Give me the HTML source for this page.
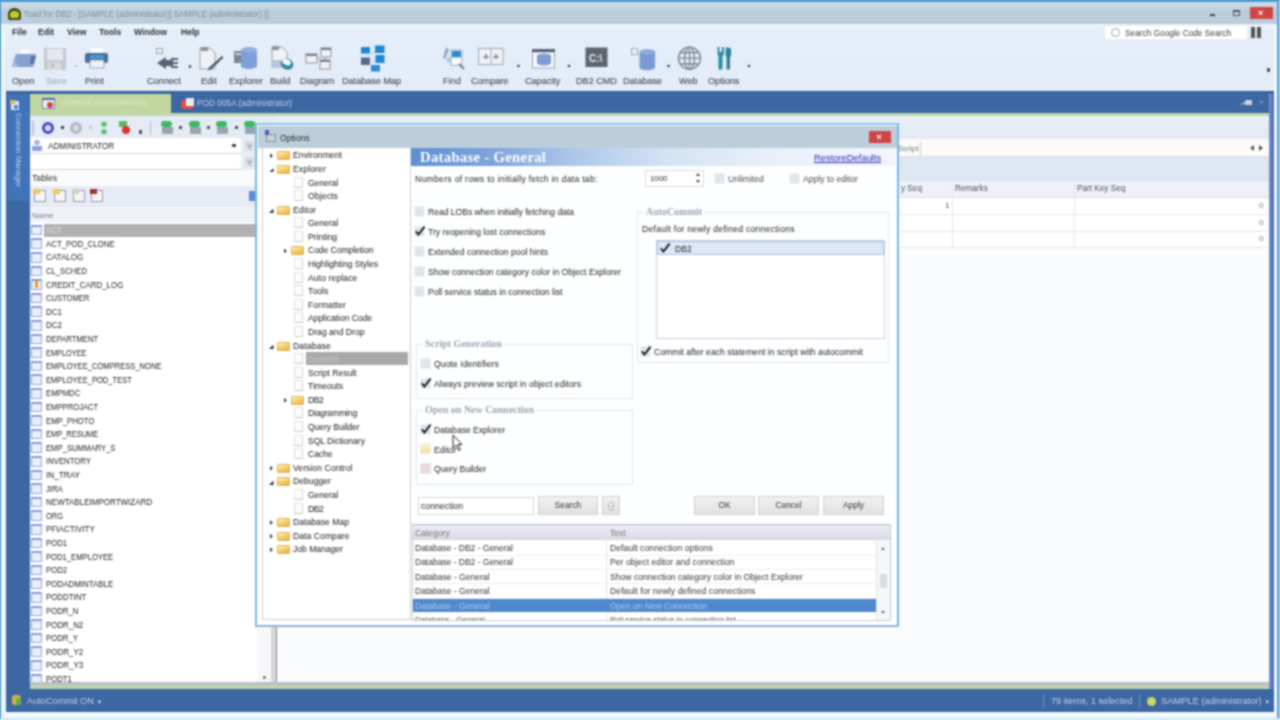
<!DOCTYPE html>
<html lang="en"><head><meta charset="utf-8"><title>Toad for DB2 - Options</title>
<style>
*{box-sizing:border-box;margin:0;padding:0}
html,body{width:1280px;height:720px;overflow:hidden;background:#f4f9fc}
body{font-family:"Liberation Sans","DejaVu Sans",sans-serif;font-size:8.4px;color:#2a2a2a;position:relative;line-height:1}
.a{position:absolute}
.t{position:absolute;white-space:nowrap;line-height:10px;height:10px}
.b{font-weight:bold}
.w{color:#fff}
.cb{position:absolute;width:11px;height:11px;background:#e1e4e9;border:1px solid #f0f2f5}
.ck{position:absolute;font-size:14px;line-height:14px;font-weight:bold;color:#0a0a0a;margin:0 0 0 -1px}
.btn{position:absolute;height:18.600px;background:linear-gradient(#f1f1f1,#e1e1e1);border:1px solid #d2d2d2;text-align:center;line-height:17px;font-size:8.4px;color:#333}
.gb{position:absolute;border:1px solid #e3e6ea}
.lg{position:absolute;font-family:"Liberation Serif","DejaVu Serif",serif;font-weight:bold;font-size:10px;color:#a0a3b4;background:#fdfeff;padding:0 2px;line-height:10px;white-space:nowrap}
.ic{position:absolute}
.fold{position:absolute;width:12.5px;height:9px;margin-top:.5px;background:linear-gradient(160deg,#fbeeb4 10%,#f3cc60 55%,#e9a94a 100%);border:1px solid #dfb45e;border-radius:1px}
.pg{position:absolute;width:8.5px;height:11px;background:#fcfcfc;border:1px solid #e2e2e2;border-bottom-color:#cfcac6;border-right-color:#d8d6d4}
.tbl{position:absolute;width:10.5px;height:10.5px;background:#eceef9;border:1px solid #9aa6de;border-left:1.5px solid #8494d8;border-top:2.5px solid #8795de}
#W{position:absolute;left:-20px;top:-20px;width:1320px;height:760px;filter:url(#bl);background:#f2f8fc}
#P{position:absolute;left:20px;top:20px;width:1280px;height:720px}
</style></head><body><svg width="0" height="0" style="position:absolute"><defs><filter id="bl" x="0" y="0" width="100%" height="100%" color-interpolation-filters="sRGB"><feConvolveMatrix order="5" kernelMatrix="0.0014 0.0090 0.0168 0.0090 0.0014 0.0090 0.0576 0.1067 0.0576 0.0090 0.0168 0.1067 0.1979 0.1067 0.0168 0.0090 0.0576 0.1067 0.0576 0.0090 0.0014 0.0090 0.0168 0.0090 0.0014" divisor="1" edgeMode="duplicate" preserveAlpha="true"/></filter></defs></svg><div id="W"><div id="P">

<div class="a" style="left:0;top:0;width:1280px;height:720px;background:#f2f8fc"></div>
<div class="a" style="left:-5px;top:-5px;width:1290px;height:6.5px;background:#4a9ad0"></div>
<div class="a" style="left:-5px;top:0;width:6.3px;height:720px;background:#4a9ad0"></div>
<div class="a" style="left:1276.8px;top:0;width:1.8px;height:720px;background:#5aa0d6"></div><div class="a" style="left:1278.6px;top:0;width:8px;height:720px;background:#b9d3e6"></div>
<div class="a" style="left:0;top:718px;width:1280px;height:2px;background:#c8ebf5"></div>
<div class="a" style="left:1.3px;top:1.5px;width:1276px;height:22.5px;background:linear-gradient(#cddde7 0,#c6d6e1 6px,#bccddb 9px,#bccddb 100%)"></div>
<div class="ic" style="left:7.500px;top:8px;width:13.500px;height:12px;background:#3e4a12;border-radius:6px 6px 2px 2px"></div>
<div class="ic" style="left:10px;top:11px;width:8.500px;height:6.500px;background:#c6cc2c;border-radius:4px 4px 2px 2px"></div>
<div class="t" style="left:23.500px;top:10px;color:#82929e;font-size:8.2px">Toad for DB2 - [SAMPLE (administrator)] SAMPLE (administrator) []</div>
<div class="a" style="left:1250px;top:7px;width:23px;height:12px;background:#cf4545"></div>
<div class="t w b" style="left:1258px;top:8px;font-size:9px">×</div>
<div class="a" style="left:1210px;top:14px;width:5px;height:2px;background:#444"></div>
<div class="a" style="left:1233px;top:10px;width:7px;height:6px;border:1px solid #555;border-top:2px solid #555"></div>
<div class="a" style="left:5px;top:24px;width:1269px;height:68px;background:linear-gradient(#eef4fb 0,#e4edf8 8px,#e3ecf7 100%)"></div>
<div class="a" style="left:1.3px;top:24px;width:4px;height:694px;background:#eef5fb"></div>
<div class="t b" style="left:12px;top:27px;font-size:8.6px;color:#333">File</div>
<div class="t b" style="left:38px;top:27px;font-size:8.6px;color:#333">Edit</div>
<div class="t b" style="left:67px;top:27px;font-size:8.6px;color:#333">View</div>
<div class="t b" style="left:99px;top:27px;font-size:8.6px;color:#333">Tools</div>
<div class="t b" style="left:134px;top:27px;font-size:8.6px;color:#333">Window</div>
<div class="t b" style="left:181px;top:27px;font-size:8.6px;color:#333">Help</div>
<div class="a" style="left:1104px;top:25px;width:144px;height:15px;background:#fff;border:1px solid #e8eef5"></div>
<div class="a" style="left:1111px;top:28px;width:9px;height:9px;border:1px solid #999;border-radius:5px"></div>
<div class="t" style="left:1125px;top:28px;font-size:8.3px;color:#3a3a3a">Search Google Code Search</div>
<div class="ic" style="left:1251px;top:27px;width:4px;height:11px;background:#555"></div><div class="ic" style="left:1257px;top:27px;width:4px;height:11px;background:#555"></div>
<div class="a" style="left:1267px;top:68px;width:3px;height:4px;background:#555"></div>
<div class="t" style="left:12px;top:76px;color:#434852;font-size:9.1px;-webkit-text-stroke:.1px #434852">Open</div>
<div class="t" style="left:46px;top:76px;color:#aab2bb;font-size:9.1px;-webkit-text-stroke:.1px #aab2bb">Save</div>
<div class="t" style="left:85px;top:76px;color:#434852;font-size:9.1px;-webkit-text-stroke:.1px #434852">Print</div>
<div class="t" style="left:147px;top:76px;color:#434852;font-size:9.1px;-webkit-text-stroke:.1px #434852">Connect</div>
<div class="t" style="left:201px;top:76px;color:#434852;font-size:9.1px;-webkit-text-stroke:.1px #434852">Edit</div>
<div class="t" style="left:229px;top:76px;color:#434852;font-size:9.1px;-webkit-text-stroke:.1px #434852">Explorer</div>
<div class="t" style="left:270px;top:76px;color:#434852;font-size:9.1px;-webkit-text-stroke:.1px #434852">Build</div>
<div class="t" style="left:300px;top:76px;color:#434852;font-size:9.1px;-webkit-text-stroke:.1px #434852">Diagram</div>
<div class="t" style="left:342px;top:76px;color:#434852;font-size:9.1px;-webkit-text-stroke:.1px #434852">Database Map</div>
<div class="t" style="left:443px;top:76px;color:#434852;font-size:9.1px;-webkit-text-stroke:.1px #434852">Find</div>
<div class="t" style="left:471px;top:76px;color:#434852;font-size:9.1px;-webkit-text-stroke:.1px #434852">Compare</div>
<div class="t" style="left:525px;top:76px;color:#434852;font-size:9.1px;-webkit-text-stroke:.1px #434852">Capacity</div>
<div class="t" style="left:576px;top:76px;color:#434852;font-size:9.1px;-webkit-text-stroke:.1px #434852">DB2 CMD</div>
<div class="t" style="left:623px;top:76px;color:#434852;font-size:9.1px;-webkit-text-stroke:.1px #434852">Database</div>
<div class="t" style="left:679px;top:76px;color:#434852;font-size:9.1px;-webkit-text-stroke:.1px #434852">Web</div>
<div class="t" style="left:708px;top:76px;color:#434852;font-size:9.1px;-webkit-text-stroke:.1px #434852">Options</div><svg class="a" style="left:0;top:40px" width="780" height="36" viewBox="0 40 780 36">
<path d="M20 49h10v6h-10z" fill="#f6f8fc"/><path d="M16 54h20l-3 13h-21z" fill="#879fd2"/><path d="M31 56h5l-2 8h-4z" fill="#5a74aa"/><path d="M14 57l-2 10h6z" fill="#a8b8de"/>
<rect x="44" y="48" width="22" height="22" fill="#c6c8d0"/><rect x="47" y="49" width="16" height="11" fill="#e6e7ec"/><rect x="48" y="62" width="13" height="8" fill="#d9dae0"/><rect x="51" y="63" width="3" height="5" fill="#bdbfc8"/>
<circle cx="76" cy="66" r="1.1" fill="#b0b6c0"/>
<rect x="91" y="48" width="12" height="6" fill="#fbfcfe"/><rect x="85" y="53" width="23" height="10" rx="2" fill="#4a6c98"/><rect x="90" y="55" width="14" height="3.5" fill="#3b9ade"/><rect x="90" y="60" width="14" height="8" fill="#eef0f5" stroke="#8d96a6" stroke-width=".8"/>
<rect x="156.5" y="48.5" width="6" height="5" fill="#e8edf4" stroke="#a5acb8"/><path d="M157 63l9-6v3h5v-2h7v2h-5v2h5v2h-5v2h5v2h-7v-2h-5v3z" fill="#566274"/>
<circle cx="190" cy="66.5" r="1.3" fill="#3c3c44"/>
<path d="M200 48h10l5 5v16h-15z" fill="#f0f2f7" stroke="#9aa0ac" stroke-width="1"/><path d="M201 47h7v4h-7z" fill="#8c94a2"/><path d="M222 56l1.5 1.5-12.5 12-3 1 1-3z" fill="#4c5666"/>
<rect x="234" y="51" width="8" height="12" fill="#7c8494"/><rect x="235" y="53" width="6" height="2" fill="#c8ccd6"/><path d="M241 50a8 3 0 0 1 16 0v16a8 3 0 0 1-16 0z" fill="#7e9fd8"/><ellipse cx="249" cy="50" rx="8" ry="2.6" fill="#93b0e2"/>
<path d="M272 47h10l5 5v15h-15z" fill="#f0f2f7" stroke="#9aa0ac"/><path d="M272 46h7v4h-7z" fill="#8c94a2"/><path d="M272 60h9v7h-9z" fill="#b9c1e0"/><ellipse cx="287" cy="64" rx="6.5" ry="5.5" fill="#2c8c9e" transform="rotate(25 287 64)"/><ellipse cx="286.5" cy="62" rx="4.5" ry="3" fill="#f4f8fa" transform="rotate(25 286.5 62)"/>
<rect x="306" y="54" width="11" height="9" fill="#f1f2f6" stroke="#8f929c"/><rect x="306" y="54" width="11" height="2" fill="#7a7e8a"/>
<rect x="321" y="48" width="10" height="9" fill="#f1f2f6" stroke="#8f929c"/><rect x="321" y="48" width="10" height="2" fill="#7a7e8a"/>
<rect x="320" y="60" width="10" height="9" fill="#f1f2f6" stroke="#8f929c"/><rect x="320" y="60" width="10" height="2" fill="#7a7e8a"/>
<path d="M317 58h3M325 57v3" stroke="#8f929c" fill="none"/>
<rect x="361" y="47" width="9" height="6.5" fill="#1f86d2"/>
<rect x="375" y="45.5" width="9.5" height="7.5" fill="#1f86d2"/>
<rect x="361" y="57.5" width="9" height="7.5" fill="#56688c"/>
<rect x="375.5" y="55" width="9" height="8" fill="#1f86d2"/>
<rect x="371" y="65" width="9" height="6.5" fill="#2a8ad6"/>
<path d="M370 55l5-3M372 60l4 3" stroke="#9cc4e8" fill="none"/>
<path d="M446 48l3 1-4 10-2-1z" fill="#8ea2c6"/><rect x="452" y="51" width="9" height="6.5" fill="#2a8ad2"/><rect x="452" y="57.5" width="9" height="7" fill="#f8fafc"/><rect x="451" y="50" width="11" height="15.5" fill="none" stroke="#a6b4cc" stroke-width="1"/><path d="M459 64l5 5" stroke="#6a7486" stroke-width="1.8"/><circle cx="449" cy="60" r="3" fill="#9cc8d8" opacity=".7"/>
<rect x="478.5" y="48.500" width="24.500" height="16" fill="#f1f2f6" stroke="#a2a5ae"/><path d="M491 49v15" stroke="#a2a5ae"/><path d="M483 57h6M493 57h6M486 54v5M496 54v5" stroke="#666a74" stroke-width="1.2"/>
<circle cx="518.500" cy="66" r="1.3" fill="#3c3c44"/>
<rect x="532.5" y="49.500" width="22" height="18.500" fill="#f4f6fa" stroke="#a2a8b4"/><rect x="532" y="49" width="23" height="3.200" fill="#586270"/><path d="M537 56a7 2.5 0 0 1 14 0v7a7 2.500 0 0 1-14 0z" fill="#7c9cd4"/>
<circle cx="569" cy="66" r="1.3" fill="#3c3c44"/>
<rect x="585.5" y="47.500" width="22" height="19.500" fill="#5c646f"/>
<text x="589" y="62" font-family="Liberation Sans,sans-serif" font-weight="bold" font-size="10" fill="#eef0f4">C:\</text>
<rect x="631.5" y="48.500" width="6" height="6" fill="#e9edf4" stroke="#a5acb8"/><path d="M639.5 52a7.800 2.800 0 0 1 15.600 0v15.500a7.800 2.800 0 0 1-15.600 0z" fill="#7b9ad2"/><ellipse cx="647.3" cy="52" rx="7.800" ry="2.500" fill="#8eabde"/>
<circle cx="668.500" cy="66" r="1.3" fill="#3c3c44"/>
<g fill="none" stroke="#7d848e" stroke-width="1.300"><circle cx="689.500" cy="58.200" r="11"/><ellipse cx="689.500" cy="58.200" rx="5" ry="11"/><path d="M678.500 58.200h22M689.500 47.200v22M680.500 52.500h18M680.500 64h18"/></g>
<path d="M717.500 47h2v5h2.500v-5h2v7l-1.500 2v13.500h-4v-13.500l-1-2z" fill="#2b8aa8"/><path d="M726 47l5 1.500v7l-1 1.500v12.500h-3.500v-12.500l-1-1.500z" fill="#2f7f9c"/>
<circle cx="749" cy="66" r="1.3" fill="#3c3c44"/>
</svg><div class="a" style="left:6px;top:91px;width:1268px;height:22px;background:#3c67a3;border-top:1px solid #2f5890"></div>
<div class="a" style="left:6px;top:94px;width:24px;height:618px;background:#3c67a3;"></div>
<div class="a" style="left:8px;top:94px;width:21px;height:107px;background:#4173b8;"></div>
<div class="ic" style="left:11px;top:101px;width:8px;height:9px;background:#dfe8f4"></div><div class="ic" style="left:10px;top:100px;width:5px;height:4px;background:#d4b860"></div><div class="ic" style="left:14px;top:105px;width:4px;height:4px;background:#5a8ad8"></div>
<div class="t" style="left:13px;top:113px;color:#c5d5ea;font-size:8px;transform-origin:0 0;transform:rotate(90deg) translate(0,-10px);">Connection Manager</div>
<div class="a" style="left:1269px;top:94px;width:5px;height:618px;background:linear-gradient(90deg,#8496c8,#5274ba 60%,#4a6fb4);"></div>
<div class="a" style="left:30px;top:94px;width:141px;height:22.3px;background:#c4d6a0;"></div>
<div class="ic" style="left:42px;top:98px;width:13px;height:11px;background:#f0f0e0;border:1px solid #5f8fd0;border-top:2px solid #3f6fc0"></div><div class="ic" style="left:47px;top:102px;width:6px;height:6px;background:#d84040;border-radius:3px"></div>
<div class="t" style="left:60px;top:98px;color:#d9e6c2;font-size:8px">SAMPLE (administrator)</div>
<div class="ic" style="left:181px;top:100px;width:13px;height:9px;background:#e05040;border-radius:3px"></div><div class="ic" style="left:186px;top:98px;width:8px;height:8px;background:#e8eef8"></div>
<div class="t" style="left:197px;top:98px;color:#c0cee6;font-size:8.3px">POD 005A (administrator)</div>
<div class="ic" style="left:1240px;top:100px;width:12px;height:5px;background:#c8d4e8;clip-path:polygon(0 100%,45% 30%,45% 0,100% 0,100% 100%,45% 100%,45% 70%)"></div><div class="ic" style="left:1260px;top:101px;width:3px;height:2px;background:#7f9cc8"></div>
<div class="a" style="left:30px;top:113px;width:1239px;height:3.3px;background:#c0d8ac;"></div>
<div class="a" style="left:30px;top:116px;width:1239px;height:570px;background:#fbfcfe;"></div>
<div class="a" style="left:30px;top:116.3px;width:248px;height:21.7px;background:#e4ebf6;"></div>
<div class="ic" style="left:42px;top:121.5px;width:12px;height:12px;background:#dfe2f8;border:3px solid #4749c4;border-radius:6px"></div>
<div class="ic" style="left:70px;top:121.5px;width:12px;height:12px;background:#d9dce4;border:3px solid #b4b8c4;border-radius:6px"></div>
<div class="ic" style="left:32px;top:121px;width:1.5px;height:14px;background:repeating-linear-gradient(#aab4c4 0,#aab4c4 1.5px,transparent 1.5px,transparent 3px)"></div>
<div class="ic" style="left:89px;top:126px;width:3px;height:3px;background:#c4c8d0"></div>
<div class="ic" style="left:61px;top:126px;width:3px;height:3px;background:#444"></div>
<svg class="a" style="left:98px;top:120px" width="12" height="16" viewBox="0 0 12 16"><path d="M6 1l4 4h-2.500v2h-3v-2h-2.500z" fill="#4fbe5a"/><path d="M6 15l-4-4h2.500v-2h3v2h2.500z" fill="#4fbe5a"/></svg>
<div class="ic" style="left:119px;top:121px;width:8px;height:6px;background:#5cb85c"></div><div class="ic" style="left:122px;top:126px;width:8px;height:8px;background:#e03030;border-radius:4px"></div>
<div class="ic" style="left:139px;top:130px;width:3px;height:4px;background:#555"></div>
<div class="a" style="left:150px;top:121px;width:1px;height:14px;background:#b8c0cc;"></div>
<div class="ic" style="left:161px;top:121px;width:11px;height:6px;background:#3cb860;border-radius:3px"></div><div class="ic" style="left:162px;top:127px;width:11px;height:7px;background:#9aa4ae"></div>
<div class="ic" style="left:189px;top:121px;width:11px;height:6px;background:#3cb860;border-radius:3px"></div><div class="ic" style="left:190px;top:127px;width:11px;height:7px;background:#9aa4ae"></div>
<div class="ic" style="left:216px;top:121px;width:11px;height:6px;background:#3cb860;border-radius:3px"></div><div class="ic" style="left:217px;top:127px;width:11px;height:7px;background:#9aa4ae"></div>
<div class="ic" style="left:244px;top:121px;width:11px;height:6px;background:#3cb860;border-radius:3px"></div><div class="ic" style="left:245px;top:127px;width:11px;height:7px;background:#9aa4ae"></div>
<div class="ic" style="left:179px;top:126px;width:3px;height:3px;background:#555"></div>
<div class="ic" style="left:207px;top:126px;width:3px;height:3px;background:#555"></div>
<div class="ic" style="left:235px;top:126px;width:3px;height:3px;background:#555"></div>
<div class="a" style="left:30px;top:138px;width:211px;height:16px;background:#fff;border-bottom:1px solid #d0d4da"></div>
<div class="a" style="left:30px;top:154px;width:211px;height:16px;background:#fff;border-bottom:1px solid #d0d4da"></div>
<div class="a" style="left:241px;top:138px;width:29px;height:32px;background:#e9edf3;"></div>
<div class="ic" style="left:34px;top:140px;width:6px;height:5px;background:#a8b4d8;border-radius:3px"></div><div class="ic" style="left:32px;top:146px;width:10px;height:5px;background:#8f9ed8"></div>
<div class="t" style="left:47.5px;top:141px;color:#1a1a1a;font-size:8.7px;transform-origin:0 50%;transform:scaleX(.93)">ADMINISTRATOR</div>
<div class="ic" style="left:232px;top:144px;width:4px;height:3px;background:#444"></div>
<div class="ic" style="left:245px;top:141px;width:9px;height:10px;background:#d9dde4"></div><div class="ic" style="left:245px;top:157px;width:9px;height:10px;background:#d9dde4"></div>
<div class="t" style="left:247px;top:142px;color:#777;font-size:8px">Y</div><div class="t" style="left:247px;top:158px;color:#777;font-size:8px">Y</div>
<div class="a" style="left:30px;top:170px;width:240px;height:16px;background:#fafbfd;"></div>
<div class="t" style="left:32px;top:173px;color:#2a2a2a;font-size:8.7px">Tables</div>
<div class="a" style="left:30px;top:186px;width:240px;height:21px;background:#e6ebf5;border-bottom:1px solid #dfe3ea"></div>
<div class="ic" style="left:34px;top:190px;width:12px;height:12px;background:#f4f5f8;border:1px solid #99a"></div><div class="ic" style="left:33px;top:189px;width:7px;height:5px;background:#f0c860"></div>
<div class="ic" style="left:54px;top:190px;width:12px;height:12px;background:#f4f5f8;border:1px solid #99a"></div><div class="ic" style="left:53px;top:189px;width:7px;height:5px;background:#f0c860"></div>
<div class="ic" style="left:73px;top:190px;width:12px;height:12px;background:#f4f5f8;border:1px solid #99a"></div><div class="ic" style="left:72px;top:189px;width:7px;height:5px;background:#d8d0c0"></div>
<div class="ic" style="left:91px;top:190px;width:12px;height:12px;background:#f4f5f8;border:1px solid #99a"></div><div class="ic" style="left:90px;top:189px;width:7px;height:5px;background:#a03030"></div>
<div class="ic" style="left:249px;top:191px;width:8px;height:10px;background:#5a8ad8"></div>
<div class="a" style="left:30px;top:208px;width:240px;height:14px;background:#eef1f6;"></div>
<div class="t" style="left:32px;top:211px;color:#7a8088;font-size:8px">Name</div>
<div class="a" style="left:30px;top:222px;width:228px;height:464px;background:#fff;"></div>
<div class="a" style="left:43.5px;top:223.5px;width:214.5px;height:13.5px;background:#b2b0b3;"></div>
<div class="tbl" style="left:31px;top:224.8px"></div><div class="t" style="left:46px;top:225.1px;color:#dadada;font-size:8.7px;transform-origin:0 50%;transform:scaleX(0.892)">ACT</div>
<div class="tbl" style="left:31px;top:238.4px"></div><div class="t" style="left:46px;top:238.7px;color:#1a1a1a;font-size:8.7px;transform-origin:0 50%;transform:scaleX(0.906)">ACT_POD_CLONE</div>
<div class="tbl" style="left:31px;top:252.0px"></div><div class="t" style="left:46px;top:252.3px;color:#1a1a1a;font-size:8.7px;transform-origin:0 50%;transform:scaleX(0.926)">CATALOG</div>
<div class="tbl" style="left:31px;top:265.6px"></div><div class="t" style="left:46px;top:265.9px;color:#1a1a1a;font-size:8.7px;transform-origin:0 50%;transform:scaleX(0.883)">CL_SCHED</div>
<div class="tbl" style="left:31px;top:279.2px"></div><div class="t" style="left:46px;top:279.5px;color:#1a1a1a;font-size:8.7px;transform-origin:0 50%;transform:scaleX(0.910)">CREDIT_CARD_LOG</div>
<div class="tbl" style="left:31px;top:292.8px"></div><div class="t" style="left:46px;top:293.1px;color:#1a1a1a;font-size:8.7px;transform-origin:0 50%;transform:scaleX(0.873)">CUSTOMER</div>
<div class="tbl" style="left:31px;top:306.4px"></div><div class="t" style="left:46px;top:306.7px;color:#1a1a1a;font-size:8.7px;transform-origin:0 50%;transform:scaleX(0.919)">DC1</div>
<div class="tbl" style="left:31px;top:320.0px"></div><div class="t" style="left:46px;top:320.3px;color:#1a1a1a;font-size:8.7px;transform-origin:0 50%;transform:scaleX(0.919)">DC2</div>
<div class="tbl" style="left:31px;top:333.6px"></div><div class="t" style="left:46px;top:333.9px;color:#1a1a1a;font-size:8.7px;transform-origin:0 50%;transform:scaleX(0.884)">DEPARTMENT</div>
<div class="tbl" style="left:31px;top:347.2px"></div><div class="t" style="left:46px;top:347.5px;color:#1a1a1a;font-size:8.7px;transform-origin:0 50%;transform:scaleX(0.848)">EMPLOYEE</div>
<div class="tbl" style="left:31px;top:360.8px"></div><div class="t" style="left:46px;top:361.1px;color:#1a1a1a;font-size:8.7px;transform-origin:0 50%;transform:scaleX(0.873)">EMPLOYEE_COMPRESS_NONE</div>
<div class="tbl" style="left:31px;top:374.4px"></div><div class="t" style="left:46px;top:374.7px;color:#1a1a1a;font-size:8.7px;transform-origin:0 50%;transform:scaleX(0.872)">EMPLOYEE_POD_TEST</div>
<div class="tbl" style="left:31px;top:388.0px"></div><div class="t" style="left:46px;top:388.3px;color:#1a1a1a;font-size:8.7px;transform-origin:0 50%;transform:scaleX(0.887)">EMPMDC</div>
<div class="tbl" style="left:31px;top:401.6px"></div><div class="t" style="left:46px;top:401.9px;color:#1a1a1a;font-size:8.7px;transform-origin:0 50%;transform:scaleX(0.880)">EMPPROJACT</div>
<div class="tbl" style="left:31px;top:415.2px"></div><div class="t" style="left:46px;top:415.5px;color:#1a1a1a;font-size:8.7px;transform-origin:0 50%;transform:scaleX(0.890)">EMP_PHOTO</div>
<div class="tbl" style="left:31px;top:428.8px"></div><div class="t" style="left:46px;top:429.1px;color:#1a1a1a;font-size:8.7px;transform-origin:0 50%;transform:scaleX(0.859)">EMP_RESUME</div>
<div class="tbl" style="left:31px;top:442.4px"></div><div class="t" style="left:46px;top:442.7px;color:#1a1a1a;font-size:8.7px;transform-origin:0 50%;transform:scaleX(0.884)">EMP_SUMMARY_S</div>
<div class="tbl" style="left:31px;top:456.0px"></div><div class="t" style="left:46px;top:456.3px;color:#1a1a1a;font-size:8.7px;transform-origin:0 50%;transform:scaleX(0.892)">INVENTORY</div>
<div class="tbl" style="left:31px;top:469.6px"></div><div class="t" style="left:46px;top:469.9px;color:#1a1a1a;font-size:8.7px;transform-origin:0 50%;transform:scaleX(0.942)">IN_TRAY</div>
<div class="tbl" style="left:31px;top:483.2px"></div><div class="t" style="left:46px;top:483.5px;color:#1a1a1a;font-size:8.7px;transform-origin:0 50%;transform:scaleX(0.892)">JIRA</div>
<div class="tbl" style="left:31px;top:496.8px"></div><div class="t" style="left:46px;top:497.1px;color:#1a1a1a;font-size:8.7px;transform-origin:0 50%;transform:scaleX(0.923)">NEWTABLEIMPORTWIZARD</div>
<div class="tbl" style="left:31px;top:510.4px"></div><div class="t" style="left:46px;top:510.7px;color:#1a1a1a;font-size:8.7px;transform-origin:0 50%;transform:scaleX(0.858)">ORG</div>
<div class="tbl" style="left:31px;top:524.0px"></div><div class="t" style="left:46px;top:524.3px;color:#1a1a1a;font-size:8.7px;transform-origin:0 50%;transform:scaleX(0.930)">PFIACTIVITY</div>
<div class="tbl" style="left:31px;top:537.6px"></div><div class="t" style="left:46px;top:537.9px;color:#1a1a1a;font-size:8.7px;transform-origin:0 50%;transform:scaleX(0.892)">POD1</div>
<div class="tbl" style="left:31px;top:551.2px"></div><div class="t" style="left:46px;top:551.5px;color:#1a1a1a;font-size:8.7px;transform-origin:0 50%;transform:scaleX(0.881)">POD1_EMPLOYEE</div>
<div class="tbl" style="left:31px;top:564.8px"></div><div class="t" style="left:46px;top:565.1px;color:#1a1a1a;font-size:8.7px;transform-origin:0 50%;transform:scaleX(0.892)">POD2</div>
<div class="tbl" style="left:31px;top:578.4px"></div><div class="t" style="left:46px;top:578.7px;color:#1a1a1a;font-size:8.7px;transform-origin:0 50%;transform:scaleX(0.912)">PODADMINTABLE</div>
<div class="tbl" style="left:31px;top:592.0px"></div><div class="t" style="left:46px;top:592.3px;color:#1a1a1a;font-size:8.7px;transform-origin:0 50%;transform:scaleX(0.906)">PODDTINT</div>
<div class="tbl" style="left:31px;top:605.6px"></div><div class="t" style="left:46px;top:605.9px;color:#1a1a1a;font-size:8.7px;transform-origin:0 50%;transform:scaleX(0.892)">PODR_N</div>
<div class="tbl" style="left:31px;top:619.2px"></div><div class="t" style="left:46px;top:619.5px;color:#1a1a1a;font-size:8.7px;transform-origin:0 50%;transform:scaleX(0.908)">PODR_N2</div>
<div class="tbl" style="left:31px;top:632.8px"></div><div class="t" style="left:46px;top:633.1px;color:#1a1a1a;font-size:8.7px;transform-origin:0 50%;transform:scaleX(0.892)">PODR_Y</div>
<div class="tbl" style="left:31px;top:646.4px"></div><div class="t" style="left:46px;top:646.7px;color:#1a1a1a;font-size:8.7px;transform-origin:0 50%;transform:scaleX(0.918)">PODR_Y2</div>
<div class="tbl" style="left:31px;top:660.0px"></div><div class="t" style="left:46px;top:660.3px;color:#1a1a1a;font-size:8.7px;transform-origin:0 50%;transform:scaleX(0.918)">PODR_Y3</div>
<div class="tbl" style="left:31px;top:673.6px"></div><div class="t" style="left:46px;top:673.9px;color:#1a1a1a;font-size:8.7px;transform-origin:0 50%;transform:scaleX(0.896)">PODT1</div>
<div class="ic" style="left:35px;top:281px;width:3px;height:7px;background:#e8a020"></div>
<div class="a" style="left:257px;top:222px;width:14px;height:461px;background:#f7f8fa;"></div>
<div class="ic" style="left:263px;top:676px;width:3px;height:3px;background:#888"></div>
<div class="a" style="left:271px;top:130px;width:5px;height:553px;background:#d6d7dc;"></div>
<div class="a" style="left:276px;top:130px;width:1.2px;height:553px;background:#8b8b93;"></div>
<div class="a" style="left:277px;top:116.3px;width:992px;height:23px;background:linear-gradient(#e9eff8,#e2e9f4);"></div>
<div class="a" style="left:276px;top:139px;width:993px;height:17.5px;background:#fdfaf9;border-bottom:1px solid #dcdde2"></div>
<div class="t" style="left:898px;top:144px;color:#777;font-size:8px">Script</div>
<div class="a" style="left:920px;top:142px;width:1px;height:14px;background:#ccc;"></div>
<div class="ic" style="left:1250px;top:145px;width:4px;height:6px;background:#555;clip-path:polygon(100% 0,0 50%,100% 100%)"></div><div class="ic" style="left:1259px;top:145px;width:4px;height:6px;background:#555;clip-path:polygon(0 0,100% 50%,0 100%)"></div>
<div class="a" style="left:276px;top:156.5px;width:993px;height:24.5px;background:#dee6f1;"></div>
<div class="a" style="left:276px;top:181px;width:993px;height:17px;background:#eef1f7;border-bottom:1px solid #dde0e6"></div>
<div class="t" style="left:901px;top:184px;color:#4a4f58;font-size:8.2px">y Seq</div>
<div class="t" style="left:955px;top:184px;color:#4a4f58;font-size:8.2px">Remarks</div>
<div class="t" style="left:1077px;top:184px;color:#4a4f58;font-size:8.2px">Part Key Seq</div>
<div class="a" style="left:276px;top:198px;width:993px;height:50px;background:#fff;"></div>
<div class="a" style="left:276px;top:214px;width:993px;height:1px;background:#e6e8ec;"></div>
<div class="a" style="left:276px;top:231px;width:993px;height:1px;background:#e6e8ec;"></div>
<div class="a" style="left:276px;top:247px;width:993px;height:1px;background:#e6e8ec;"></div>
<div class="a" style="left:952px;top:181px;width:1px;height:67px;background:#e2e5ea;"></div>
<div class="a" style="left:1074px;top:181px;width:1px;height:67px;background:#e2e5ea;"></div>
<div class="t" style="left:945px;top:201px;color:#555;font-size:8px">1</div>
<div class="t" style="left:1259px;top:201px;color:#777;font-size:8px">0</div>
<div class="t" style="left:1259px;top:218px;color:#777;font-size:8px">0</div>
<div class="t" style="left:1259px;top:234px;color:#777;font-size:8px">0</div>
<div class="a" style="left:30px;top:682.3px;width:1239px;height:3.2px;background:#bebdc7;"></div>
<div class="a" style="left:30px;top:685px;width:1239px;height:4px;background:#bdd4aa;"></div>
<div class="a" style="left:6px;top:689px;width:1268px;height:23px;background:#3c67a3;"></div>
<div class="ic" style="left:12px;top:695px;width:9px;height:10px;background:#d8b040;border-radius:3px"></div><div class="ic" style="left:16px;top:698px;width:5px;height:7px;background:#60b050"></div>
<div class="t" style="left:27px;top:695.5px;color:#c3d1e8;font-size:9.2px">AutoCommit ON <span style="font-size:6px">▼</span></div>
<div class="a" style="left:1043px;top:694px;width:1px;height:14px;background:#6f8fc0;"></div>
<div class="a" style="left:1139px;top:694px;width:1px;height:14px;background:#6f8fc0;"></div>
<div class="t" style="left:1051px;top:695.5px;color:#c3d1e8;font-size:9.2px">79 items, 1 selected</div>
<div class="ic" style="left:1147px;top:697px;width:9px;height:9px;background:#c8d860;border-radius:5px"></div>
<div class="t" style="left:1161px;top:695.5px;color:#c3d1e8;font-size:9.35px">SAMPLE (administrator) <span style="font-size:6px">▼</span></div><div class="a" style="left:255.3px;top:123.3px;width:643.4px;height:504.2px;background:#fdfeff;border:2.4px solid #74b8e4;border-bottom-color:#8fb2d6;border-top-color:#8cc6e2"></div>
<div class="a" style="left:257.5px;top:125.5px;width:639px;height:22.3px;background:#bdcedb;"></div>
<div class="ic" style="left:266px;top:134px;width:10px;height:8px;background:#c9d0d4;border:1px solid #8a9498"></div><div class="ic" style="left:265px;top:130px;width:4px;height:5px;background:#4a5cc0"></div>
<div class="t" style="left:280px;top:133px;color:#2a2a2a;font-size:8.6px;">Options</div>
<div class="a" style="left:869px;top:131px;width:22px;height:12px;background:#cf4545;"></div>
<div class="t w b" style="left:876.5px;top:132px;font-size:9px">×</div>
<div class="a" style="left:262px;top:147.8px;width:148.5px;height:472.2px;background:#fff;border:1px solid #cfcfd4;border-top:none"></div>
<div class="ic" style="left:270px;top:153.3px;width:3px;height:5px;background:#444;clip-path:polygon(0 0,100% 50%,0 100%)"></div>
<div class="fold" style="left:277px;top:150.8px"></div>
<div class="t" style="left:293px;top:150.3px;color:#161616;font-size:8.6px;letter-spacing:0.07px;">Environment</div>
<div class="ic" style="left:269px;top:167.9px;width:4.5px;height:4.5px;background:#333;clip-path:polygon(100% 0,100% 100%,0 100%)"></div>
<div class="fold" style="left:277px;top:164.4px"></div>
<div class="t" style="left:293px;top:163.9px;color:#161616;font-size:8.6px;letter-spacing:0.12px;">Explorer</div>
<div class="pg" style="left:294px;top:176.5px"></div>
<div class="t" style="left:308px;top:177.5px;color:#161616;font-size:8.6px;letter-spacing:-0.08px;">General</div>
<div class="pg" style="left:294px;top:190.1px"></div>
<div class="t" style="left:308px;top:191.1px;color:#161616;font-size:8.6px;letter-spacing:0.12px;">Objects</div>
<div class="ic" style="left:269px;top:208.6px;width:4.5px;height:4.5px;background:#333;clip-path:polygon(100% 0,100% 100%,0 100%)"></div>
<div class="fold" style="left:277px;top:205.1px"></div>
<div class="t" style="left:293px;top:204.6px;color:#161616;font-size:8.6px;letter-spacing:0.09px;">Editor</div>
<div class="pg" style="left:294px;top:217.2px"></div>
<div class="t" style="left:308px;top:218.2px;color:#161616;font-size:8.6px;letter-spacing:-0.08px;">General</div>
<div class="pg" style="left:294px;top:230.8px"></div>
<div class="t" style="left:308px;top:231.8px;color:#161616;font-size:8.6px;letter-spacing:-0.02px;">Printing</div>
<div class="ic" style="left:284px;top:248.4px;width:3px;height:5px;background:#444;clip-path:polygon(0 0,100% 50%,0 100%)"></div>
<div class="fold" style="left:291px;top:245.9px"></div>
<div class="t" style="left:308px;top:245.4px;color:#161616;font-size:8.6px;letter-spacing:-0.07px;">Code Completion</div>
<div class="pg" style="left:294px;top:258.0px"></div>
<div class="t" style="left:308px;top:259.0px;color:#161616;font-size:8.6px;letter-spacing:-0.04px;">Highlighting Styles</div>
<div class="pg" style="left:294px;top:271.6px"></div>
<div class="t" style="left:308px;top:272.6px;color:#161616;font-size:8.6px;letter-spacing:0.10px;">Auto replace</div>
<div class="pg" style="left:294px;top:285.2px"></div>
<div class="t" style="left:308px;top:286.2px;color:#161616;font-size:8.6px;letter-spacing:0.08px;">Tools</div>
<div class="pg" style="left:294px;top:298.7px"></div>
<div class="t" style="left:308px;top:299.7px;color:#161616;font-size:8.6px;letter-spacing:0.08px;">Formatter</div>
<div class="pg" style="left:294px;top:312.3px"></div>
<div class="t" style="left:308px;top:313.3px;color:#161616;font-size:8.6px;letter-spacing:-0.06px;">Application Code</div>
<div class="pg" style="left:294px;top:325.9px"></div>
<div class="t" style="left:308px;top:326.9px;color:#161616;font-size:8.6px;letter-spacing:0.01px;">Drag and Drop</div>
<div class="ic" style="left:269px;top:344.5px;width:4.5px;height:4.5px;background:#333;clip-path:polygon(100% 0,100% 100%,0 100%)"></div>
<div class="fold" style="left:277px;top:341.0px"></div>
<div class="t" style="left:293px;top:340.5px;color:#161616;font-size:8.6px;letter-spacing:0.15px;">Database</div>
<div class="pg" style="left:294px;top:353.1px"></div>
<div class="a" style="left:306px;top:351.8px;width:102px;height:13.6px;background:#a9a9ab;"></div>
<div class="t" style="left:308px;top:354.1px;color:#c4c4c4;font-size:8.6px;letter-spacing:-0.08px;">General</div>
<div class="pg" style="left:294px;top:366.7px"></div>
<div class="t" style="left:308px;top:367.7px;color:#161616;font-size:8.6px;letter-spacing:-0.02px;">Script Result</div>
<div class="pg" style="left:294px;top:380.3px"></div>
<div class="t" style="left:308px;top:381.3px;color:#161616;font-size:8.6px;letter-spacing:-0.01px;">Timeouts</div>
<div class="ic" style="left:284px;top:397.8px;width:3px;height:5px;background:#444;clip-path:polygon(0 0,100% 50%,0 100%)"></div>
<div class="fold" style="left:291px;top:395.3px"></div>
<div class="t" style="left:308px;top:394.8px;color:#161616;font-size:8.6px;letter-spacing:-0.41px;">DB2</div>
<div class="pg" style="left:294px;top:407.4px"></div>
<div class="t" style="left:308px;top:408.4px;color:#161616;font-size:8.6px;letter-spacing:-0.19px;">Diagramming</div>
<div class="pg" style="left:294px;top:421.0px"></div>
<div class="t" style="left:308px;top:422.0px;color:#161616;font-size:8.6px;letter-spacing:-0.08px;">Query Builder</div>
<div class="pg" style="left:294px;top:434.6px"></div>
<div class="t" style="left:308px;top:435.6px;color:#161616;font-size:8.6px;letter-spacing:-0.04px;">SQL Dictionary</div>
<div class="pg" style="left:294px;top:448.2px"></div>
<div class="t" style="left:308px;top:449.2px;color:#161616;font-size:8.6px;letter-spacing:-0.07px;">Cache</div>
<div class="ic" style="left:270px;top:465.8px;width:3px;height:5px;background:#444;clip-path:polygon(0 0,100% 50%,0 100%)"></div>
<div class="fold" style="left:277px;top:463.3px"></div>
<div class="t" style="left:293px;top:462.8px;color:#161616;font-size:8.6px;letter-spacing:0.05px;">Version Control</div>
<div class="ic" style="left:269px;top:480.4px;width:4.5px;height:4.5px;background:#333;clip-path:polygon(100% 0,100% 100%,0 100%)"></div>
<div class="fold" style="left:277px;top:476.9px"></div>
<div class="t" style="left:293px;top:476.4px;color:#161616;font-size:8.6px;letter-spacing:0.03px;">Debugger</div>
<div class="pg" style="left:294px;top:489.0px"></div>
<div class="t" style="left:308px;top:490.0px;color:#161616;font-size:8.6px;letter-spacing:-0.08px;">General</div>
<div class="pg" style="left:294px;top:502.5px"></div>
<div class="t" style="left:308px;top:503.5px;color:#161616;font-size:8.6px;letter-spacing:-0.41px;">DB2</div>
<div class="ic" style="left:270px;top:520.1px;width:3px;height:5px;background:#444;clip-path:polygon(0 0,100% 50%,0 100%)"></div>
<div class="fold" style="left:277px;top:517.6px"></div>
<div class="t" style="left:293px;top:517.1px;color:#161616;font-size:8.6px;letter-spacing:0.01px;">Database Map</div>
<div class="ic" style="left:270px;top:533.7px;width:3px;height:5px;background:#444;clip-path:polygon(0 0,100% 50%,0 100%)"></div>
<div class="fold" style="left:277px;top:531.2px"></div>
<div class="t" style="left:293px;top:530.7px;color:#161616;font-size:8.6px;letter-spacing:0.05px;">Data Compare</div>
<div class="ic" style="left:270px;top:547.3px;width:3px;height:5px;background:#444;clip-path:polygon(0 0,100% 50%,0 100%)"></div>
<div class="fold" style="left:277px;top:544.8px"></div>
<div class="t" style="left:293px;top:544.3px;color:#161616;font-size:8.6px;letter-spacing:-0.02px;">Job Manager</div>
<div class="a" style="left:411px;top:148px;width:485px;height:18px;background:linear-gradient(90deg,#5f8ed2 0%,#7ea4dc 17%,#abc6ea 33%,#d3e2f4 52%,#e9f0f9 75%,#f1f6fc 100%);"></div>
<div class="t b w" style="left:420px;top:150px;font-family:'Liberation Serif',serif;font-size:14.6px;letter-spacing:.35px;line-height:14px;height:14px">Database - General</div>
<div class="t" style="left:814px;top:152.5px;color:#2a2ab8;font-size:9.4px;text-decoration:underline">RestoreDefaults</div>
<div class="t" style="left:415px;top:173.5px;color:#222;font-size:8.6px;letter-spacing:0.30px;">Numbers of rows to initially fetch in data tab:</div>
<div class="a" style="left:645px;top:170px;width:59px;height:17px;background:#fff;border:1px solid #d8dce2"></div>
<div class="t" style="left:650px;top:174px;color:#2a2a2a;font-size:7.8px;">1000</div>
<div class="ic" style="left:696px;top:173px;width:4px;height:3px;background:#444;clip-path:polygon(50% 0,100% 100%,0 100%)"></div><div class="ic" style="left:696px;top:180px;width:4px;height:3px;background:#444;clip-path:polygon(0 0,100% 0,50% 100%)"></div>
<div class="cb" style="left:714px;top:173px"></div>
<div class="t" style="left:728px;top:174px;color:#4a4a4a;font-size:8.6px;">Unlimited</div>
<div class="cb" style="left:789px;top:173px"></div>
<div class="t" style="left:803px;top:174px;color:#4a4a4a;font-size:8.6px;">Apply to editor</div>
<div class="cb" style="left:414px;top:206px"></div>
<div class="t" style="left:428px;top:207px;color:#222;font-size:8.6px;letter-spacing:-0.03px;">Read LOBs when initially fetching data</div>
<div class="cb" style="left:414px;top:226px"></div><svg class="a" style="left:414px;top:224px" width="13" height="14" viewBox="0 0 13 14"><path d="M1.800 7.300L4.400 10.600L10.600 2.600" fill="none" stroke="#101010" stroke-width="1.800"/></svg>
<div class="t" style="left:428px;top:227px;color:#222;font-size:8.6px;letter-spacing:0.02px;">Try reopening lost connections</div>
<div class="cb" style="left:414px;top:246px"></div>
<div class="t" style="left:428px;top:247px;color:#222;font-size:8.6px;letter-spacing:0.02px;">Extended connection pool hints</div>
<div class="cb" style="left:414px;top:266px"></div>
<div class="t" style="left:428px;top:267px;color:#222;font-size:8.6px;letter-spacing:0.01px;">Show connection category color in Object Explorer</div>
<div class="cb" style="left:414px;top:286px"></div>
<div class="t" style="left:428px;top:287px;color:#222;font-size:8.6px;letter-spacing:-0.02px;">Poll service status in connection list</div>
<div class="gb" style="left:637px;top:212px;width:252px;height:151px"></div>
<div class="lg" style="left:644px;top:207px">AutoCommit</div>
<div class="t" style="left:642px;top:224px;color:#222;font-size:8.6px;letter-spacing:0.27px;">Default for newly defined connections</div>
<div class="a" style="left:656px;top:240px;width:229px;height:99px;background:#fff;border:1px solid #cdd0d6"></div>
<div class="a" style="left:657px;top:241px;width:227px;height:14px;background:#dce8f6;border:1px solid #a9c4e8"></div>
<svg class="a" style="left:659px;top:241px" width="13" height="14" viewBox="0 0 13 14"><path d="M1.800 7.300L4.400 10.600L10.600 2.600" fill="none" stroke="#101010" stroke-width="1.800"/></svg>
<div class="t" style="left:675px;top:243.5px;color:#222;font-size:8.6px;">DB2</div>
<div class="cb" style="left:640px;top:346px"></div><svg class="a" style="left:640px;top:344px" width="13" height="14" viewBox="0 0 13 14"><path d="M1.800 7.300L4.400 10.600L10.600 2.600" fill="none" stroke="#101010" stroke-width="1.800"/></svg>
<div class="t" style="left:654px;top:347px;color:#222;font-size:8.6px;letter-spacing:0.04px;">Commit after each statement in script with autocommit</div>
<div class="gb" style="left:416px;top:344px;width:217px;height:55px"></div>
<div class="lg" style="left:423px;top:339px">Script Generation</div>
<div class="cb" style="left:420px;top:358px"></div>
<div class="t" style="left:434px;top:359px;color:#222;font-size:8.6px;letter-spacing:0.11px;">Quote Identifiers</div>
<div class="cb" style="left:420px;top:378px"></div><svg class="a" style="left:420px;top:376px" width="13" height="14" viewBox="0 0 13 14"><path d="M1.800 7.300L4.400 10.600L10.600 2.600" fill="none" stroke="#101010" stroke-width="1.800"/></svg>
<div class="t" style="left:434px;top:379px;color:#222;font-size:8.6px;letter-spacing:0.06px;">Always preview script in object editors</div>
<div class="gb" style="left:416px;top:410px;width:217px;height:75px"></div>
<div class="lg" style="left:423px;top:405px">Open on New Connection</div>
<div class="cb" style="left:420px;top:424px"></div><svg class="a" style="left:420px;top:422px" width="13" height="14" viewBox="0 0 13 14"><path d="M1.800 7.300L4.400 10.600L10.600 2.600" fill="none" stroke="#101010" stroke-width="1.800"/></svg>
<div class="t" style="left:434px;top:425px;color:#222;font-size:8.6px;letter-spacing:-0.01px;">Database Explorer</div>
<div class="cb" style="left:420px;top:443px;background:linear-gradient(#f8f2dc,#f3dc98);border-color:#f8efd4"></div>
<div class="t" style="left:434px;top:444.5px;color:#222;font-size:8.6px;">Editor</div>
<div class="cb" style="left:420px;top:463px;background:#ead8dc;border-color:#f0e6e8"></div>
<div class="t" style="left:434px;top:464px;color:#222;font-size:8.6px;letter-spacing:-0.04px;">Query Builder</div>
<svg class="a" style="left:452px;top:434px" width="12" height="18" viewBox="0 0 12 18"><path d="M1 1 L1 14 L4 11 L6.5 16.5 L8.5 15.5 L6 10.5 L10 10.5 Z" fill="#fff" stroke="#222" stroke-width="1"/></svg>
<div class="a" style="left:418px;top:497px;width:116px;height:18px;background:#fff;border:1px solid #d4d8de"></div>
<div class="t" style="left:421px;top:501px;color:#222;font-size:8.6px;letter-spacing:0.04px;">connection</div>
<div class="btn" style="left:538px;top:496.300px;width:60px">Search</div>
<div class="btn" style="left:602px;top:496.300px;width:18px"></div><svg class="a" style="left:606px;top:500px" width="10" height="12" viewBox="0 0 10 12"><path d="M5 1.500L8.500 6H6.500V10H3.500V6H1.500Z" fill="#eee" stroke="#b4b4b4" stroke-width="1"/></svg>
<div class="btn" style="left:694px;top:496.300px;width:61px">OK</div>
<div class="btn" style="left:758px;top:496.300px;width:61px">Cancel</div>
<div class="btn" style="left:823px;top:496.300px;width:61px">Apply</div>
<div class="a" style="left:412px;top:524px;width:479px;height:97px;background:#fff;border:1px solid #c9cbd2;border-top-color:#b9bac4"></div>
<div class="a" style="left:413px;top:525px;width:477px;height:15px;background:linear-gradient(#ecedf5,#dadbe8);border-bottom:1px solid #d2d3de"></div>
<div class="a" style="left:606px;top:525px;width:1px;height:95px;background:#e0e2ea;"></div>
<div class="a" style="left:876px;top:525px;width:1px;height:95px;background:#e0e2ea;"></div>
<div class="t" style="left:415px;top:528px;color:#777;font-size:8.6px;">Category</div>
<div class="t" style="left:610px;top:528px;color:#777;font-size:8.6px;">Text</div>
<div class="t" style="left:415px;top:543.0px;color:#333;font-size:8.6px;letter-spacing:-0.06px;">Database - DB2 - General</div>
<div class="t" style="left:610px;top:543.0px;color:#333;font-size:8.6px;letter-spacing:0.06px;">Default connection options</div>
<div class="a" style="left:413px;top:554.6px;width:463px;height:1px;background:#eceef2;"></div>
<div class="t" style="left:415px;top:557.4px;color:#333;font-size:8.6px;letter-spacing:-0.06px;">Database - DB2 - General</div>
<div class="t" style="left:610px;top:557.4px;color:#333;font-size:8.6px;letter-spacing:0.04px;">Per object editor and connection</div>
<div class="a" style="left:413px;top:569.0px;width:463px;height:1px;background:#eceef2;"></div>
<div class="t" style="left:415px;top:571.8px;color:#333;font-size:8.6px;letter-spacing:-0.03px;">Database - General</div>
<div class="t" style="left:610px;top:571.8px;color:#333;font-size:8.6px;letter-spacing:0.01px;">Show connection category color in Object Explorer</div>
<div class="a" style="left:413px;top:583.4px;width:463px;height:1px;background:#eceef2;"></div>
<div class="t" style="left:415px;top:586.2px;color:#333;font-size:8.6px;letter-spacing:-0.03px;">Database - General</div>
<div class="t" style="left:610px;top:586.2px;color:#333;font-size:8.6px;letter-spacing:0.07px;">Default for newly defined connections</div>
<div class="a" style="left:413px;top:597.8px;width:463px;height:1px;background:#eceef2;"></div>
<div class="a" style="left:413px;top:598.6px;width:463px;height:13.5px;background:#4f88cd;"></div>
<div class="t" style="left:415px;top:600.6px;color:#a9c6ea;font-size:8.6px;letter-spacing:-0.03px;">Database - General</div>
<div class="t" style="left:610px;top:600.6px;color:#a9c6ea;font-size:8.6px;letter-spacing:-0.07px;">Open on New Connection</div>
<div class="a" style="left:413px;top:613.0px;width:463px;height:7px;overflow:hidden"><div class="t" style="left:2px;top:2px;font-size:8px;color:#555">Database - General</div><div class="t" style="left:197px;top:2px;font-size:8px;color:#555">Poll service status in connection list</div></div>
<div class="a" style="left:877px;top:541px;width:13px;height:79px;background:#f6f7f9;"></div>
<div class="a" style="left:880px;top:574px;width:7px;height:14px;background:#d9dce2;"></div>
<div class="ic" style="left:881px;top:547px;width:4px;height:3px;background:#777;clip-path:polygon(50% 0,100% 100%,0 100%)"></div><div class="ic" style="left:881px;top:611px;width:4px;height:3px;background:#777;clip-path:polygon(0 0,100% 0,50% 100%)"></div>
</div></div></body></html>
